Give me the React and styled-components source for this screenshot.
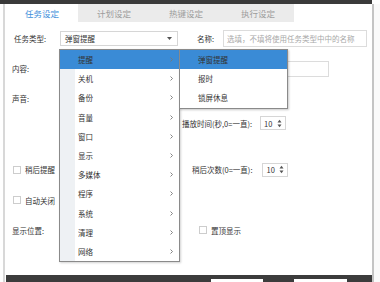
import React from 'react';
import styled, { createGlobalStyle } from 'styled-components';

const Global = createGlobalStyle`
  html, body { margin: 0; padding: 0; background: #fff; }
  body {
    font-family: "Noto Sans CJK SC", "Noto Sans", sans-serif;
    font-size: 7.5px;
    color: #333;
  }
  * { box-sizing: border-box; }
`;

const Screen = styled.div`
  width: 380px;
  height: 282px;
  overflow: hidden;
  display: flex;
  flex-direction: column;
  background: #fff;
`;
const TopBar = styled.div`
  height: 4px;
  width: 372px;
  flex: none;
  background: #3a3a3a;
`;
const Body = styled.div`
  flex: 1;
  display: flex;
  min-height: 0;
`;
const LeftEdge = styled.div`
  width: 6px;
  flex: none;
  border-left: 3px solid #fff;
  border-right: 1px solid #fff;
  background: #d8d8d8;
`;
const Main = styled.div`
  width: 366px;
  flex: none;
  display: flex;
  flex-direction: column;
`;
const RightEdge = styled.div`
  width: 8px;
  flex: none;
  border-left: 2px solid #c4c4c4;
  background: #fafafa;
`;
const Panel = styled.div`
  flex: 1;
  background: #fff;
  display: flex;
  flex-direction: column;
`;
const BottomBar = styled.div`
  height: 7px;
  flex: none;
  background: #3c3c3c;
  display: flex;
  align-items: flex-end;
  padding-left: 205px;
  gap: 31px;
`;
const FooterButton = styled.div`
  width: ${p => p.$w}px;
  height: 3px;
  background: #fff;
`;

const Tabs = styled.div`
  display: flex;
  height: 18px;
  flex: none;
`;
const Tab = styled.div`
  width: 72px;
  display: flex;
  align-items: center;
  justify-content: center;
  font-size: 8.5px;
  color: ${p => (p.$active ? '#3d8fdb' : '#9c9c9c')};
  background: ${p => (p.$active ? '#fff' : '#ebebeb')};
`;

const Form = styled.div`
  padding-left: 6px;
  display: flex;
  flex-direction: column;
`;
const Row = styled.div`
  height: ${p => p.$h}px;
  flex: none;
  display: flex;
  align-items: center;
`;
const Left = styled.div`
  width: 170px;
  flex: none;
  display: flex;
  align-items: center;
`;
const Right = styled.div`
  display: flex;
  align-items: center;
  padding-left: ${p => p.$pad || 0}px;
`;
const Label = styled.span`
  width: ${p => p.$w || 48}px;
  flex: none;
  white-space: nowrap;
  padding-left: ${p => p.$indent || 0}px;
`;
const SelectBox = styled.div`
  position: relative;
  width: 118px;
  height: 15px;
  flex: none;
  border: 1px solid #d6d6d6;
  display: flex;
  align-items: center;
  justify-content: space-between;
  padding: 0 5px 0 4px;
  background: #fff;
`;
const TextInput = styled.div`
  width: ${p => p.$w}px;
  height: ${p => p.$h || 17}px;
  flex: none;
  border: 1px solid #dcdcdc;
  display: flex;
  align-items: center;
  padding-left: 3px;
  color: #a8a8a8;
  white-space: nowrap;
  overflow: hidden;
`;
const SpinLabel = styled.span`
  white-space: nowrap;
  margin-right: ${p => p.$gap}px;
`;
const Spin = styled.div`
  width: 26px;
  height: 14px;
  border: 1px solid #d6d6d6;
  display: flex;
  align-items: center;
  justify-content: space-between;
  padding: 0 3px 0 3px;
`;
const Check = styled.label`
  display: flex;
  align-items: center;
  gap: 4px;
  margin-left: ${p => p.$ml || 0}px;
  white-space: nowrap;
`;
const Box = styled.span`
  width: 8px;
  height: 8px;
  border: 1px solid #cdcdcd;
  background: #fff;
`;

const Menu = styled.div`
  position: absolute;
  top: 17px;
  left: -2px;
  width: 121px;
  border: 1px solid #8a8a8a;
  background: linear-gradient(to right, #eef1f4 15px, #fff 15px);
  box-shadow: 1px 1px 2px rgba(0, 0, 0, 0.18);
  z-index: 10;
`;
const SubMenu = styled.div`
  position: absolute;
  top: -1px;
  left: 100%;
  width: 109px;
  border: 1px solid #8a8a8a;
  background: #fff;
  box-shadow: 1px 1px 2px rgba(0, 0, 0, 0.22);
`;
const MenuItem = styled.div`
  height: 19.2px;
  display: flex;
  align-items: center;
  justify-content: space-between;
  padding: 0 6px 0 18px;
  color: #333;
  background: ${p => (p.$active ? '#3a8bd6' : 'transparent')};
`;

const Caret = () => (
  <svg width="5" height="3" viewBox="0 0 5 3"><path d="M0 0h5L2.5 3z" fill="#555" /></svg>
);
const Chevron = () => (
  <svg width="3" height="5" viewBox="0 0 3 5"><path d="M0.5 0.5L2.5 2.5L0.5 4.5" stroke="#777" strokeWidth="0.9" fill="none" /></svg>
);
const SpinArrows = () => (
  <svg width="5" height="9" viewBox="0 0 5 9">
    <path d="M0.5 3.5h4L2.5 0.8z" fill="#555" />
    <path d="M0.5 5.5h4L2.5 8.2z" fill="#555" />
  </svg>
);

const menuItems = ['提醒', '关机', '备份', '音量', '窗口', '显示', '多媒体', '程序', '系统', '清理', '网络'];
const subItems = ['弹窗提醒', '报时', '锁屏休息'];

export default function App() {
  return (
    <>
      <Global />
      <Screen>
        <TopBar />
        <Body>
          <LeftEdge />
          <Main>
            <Panel>
              <Tabs>
                <Tab $active>任务设定</Tab>
                <Tab>计划设定</Tab>
                <Tab>热键设定</Tab>
                <Tab>执行设定</Tab>
              </Tabs>
              <Form>
                <Row $h={33}>
                  <Left>
                    <Label $indent={2}>任务类型:</Label>
                    <SelectBox>
                      <span>弹窗提醒</span>
                      <Caret />
                      <Menu>
                        {menuItems.map((m, i) => (
                          <MenuItem key={m} $active={i === 0}>
                            <span>{m}</span>
                            <Chevron />
                          </MenuItem>
                        ))}
                        <SubMenu>
                          {subItems.map((s, i) => (
                            <MenuItem key={s} $active={i === 0}>
                              <span>{s}</span>
                            </MenuItem>
                          ))}
                        </SubMenu>
                      </Menu>
                    </SelectBox>
                  </Left>
                  <Right $pad={15}>
                    <Label $w={26}>名称:</Label>
                    <TextInput $w={144}>选填，不填将使用任务类型中中的名称</TextInput>
                  </Right>
                </Row>
                <Row $h={27}>
                  <Label>内容:</Label>
                  <TextInput $w={269} $h={16} />
                </Row>
                <Row $h={33}>
                  <Label>声音:</Label>
                </Row>
                <Row $h={16}>
                  <Left />
                  <Right $pad={0}>
                    <SpinLabel $gap={8}>播放时间(秒,0=一直):</SpinLabel>
                    <Spin><span>10</span><SpinArrows /></Spin>
                  </Right>
                </Row>
                <Row $h={30} />
                <Row $h={17}>
                  <Left>
                    <Check $ml={1}><Box />稍后提醒</Check>
                  </Left>
                  <Right $pad={10}>
                    <SpinLabel $gap={10}>稍后次数(0=一直):</SpinLabel>
                    <Spin><span>10</span><SpinArrows /></Spin>
                  </Right>
                </Row>
                <Row $h={44}>
                  <Left>
                    <Check $ml={1}><Box />自动关闭</Check>
                  </Left>
                </Row>
                <Row $h={16}>
                  <Left>
                    <Label>显示位置:</Label>
                  </Left>
                  <Right $pad={17}>
                    <Check><Box />置顶显示</Check>
                  </Right>
                </Row>
              </Form>
            </Panel>
            <BottomBar>
              <FooterButton $w={52} />
              <FooterButton $w={53} />
            </BottomBar>
          </Main>
          <RightEdge />
        </Body>
      </Screen>
    </>
  );
}
